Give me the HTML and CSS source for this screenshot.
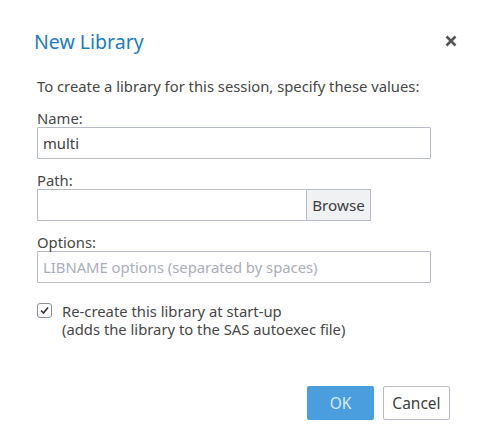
FILE: index.html
```html
<!DOCTYPE html>
<html>
<head>
<meta charset="utf-8">
<link rel="stylesheet" href="styles.css">
</head>
<body>
<div class="dialog">
  <div class="header">
    <h1 class="title">New Library</h1>
    <svg class="close" width="12" height="12" viewBox="0 0 12 12"><path d="M1.5 1.5 L10.5 10.5 M10.5 1.5 L1.5 10.5" stroke="#555" stroke-width="2.6" stroke-linecap="butt"/></svg>
  </div>
  <div class="body">
    <p class="intro">To create a library for this session, specify these values:</p>
    <label class="label">Name:</label>
    <div class="input full">multi</div>
    <label class="label">Path:</label>
    <div class="pathrow">
      <div class="input path"></div>
      <div class="browse">Browse</div>
    </div>
    <label class="label">Options:</label>
    <div class="input full placeholder">LIBNAME options (separated by spaces)</div>
    <div class="check">
      <span class="box"><svg width="11" height="11" viewBox="0 0 11 11"><path d="M2 5.5 L4.5 8 L9 2.5" fill="none" stroke="#333" stroke-width="1.6"/></svg></span>
      <span class="checktext">Re-create this library at start-up<br>(adds the library to the SAS autoexec file)</span>
    </div>
  </div>
  <div class="footer">
    <div class="btn ok">OK</div>
    <div class="btn cancel">Cancel</div>
  </div>
</div>
</body>
</html>
```
FILE: styles.css
```css
html, body {
  margin: 0;
  padding: 0;
  background: #fff;
}
body {
  font-family: "Noto Sans", sans-serif;
  color: #474747;
  width: 484px;
  height: 440px;
}
.dialog {
  padding: 26px 27px 0 34px;
}
.header {
  display: flex;
  align-items: center;
  justify-content: space-between;
  height: 30px;
}
.title {
  margin: 0;
  font-weight: 400;
  font-size: 19.5px;
  color: #1b7dc3;
}
.body {
  padding-left: 3px;
  padding-right: 26px;
  padding-top: 21px;
  font-size: 14.8px;
}
.intro {
  margin: 0 0 14px;
  line-height: 18px;
}
.label {
  display: block;
  line-height: 18px;
}
.input {
  box-sizing: border-box;
  height: 32px;
  border: 1px solid #b7bcc7;
  border-radius: 1px;
  padding: 0 5px;
  display: flex;
  align-items: center;
  color: #3d3d3d;
  margin-bottom: 12px;
}
.placeholder {
  color: #a9aeb8;
}
.pathrow {
  display: flex;
  width: 334px;
  margin-bottom: 12px;
}
.pathrow .input {
  margin-bottom: 0;
}
.path {
  flex: 1;
  border-right: none;
}
.browse {
  box-sizing: border-box;
  height: 32px;
  width: 65px;
  border: 1px solid #b7bcc7;
  background: #f0f1f3;
  display: flex;
  align-items: center;
  justify-content: center;
  color: #3d3d3d;
  font-size: 15.2px;
}
.check {
  display: flex;
  align-items: flex-start;
  margin-top: 19px;
}
.box {
  box-sizing: border-box;
  flex: none;
  width: 15px;
  height: 15px;
  border: 1px solid #8a8f99;
  border-radius: 3px;
  display: flex;
  align-items: center;
  justify-content: center;
  margin-top: 1px;
}
.checktext {
  margin-left: 10px;
  line-height: 18px;
}
.footer {
  display: flex;
  justify-content: flex-end;
  gap: 9px;
  padding-right: 7px;
  margin-top: 48px;
}
.btn {
  box-sizing: border-box;
  height: 34px;
  display: flex;
  align-items: center;
  justify-content: center;
  font-size: 15.5px;
  border-radius: 2px;
}
.ok {
  width: 67px;
  background: #4a9ede;
  color: #d8ebf9;
}
.cancel {
  width: 67px;
  border: 1px solid #b7bcc7;
  color: #3d3d3d;
  background: #fff;
}
```
